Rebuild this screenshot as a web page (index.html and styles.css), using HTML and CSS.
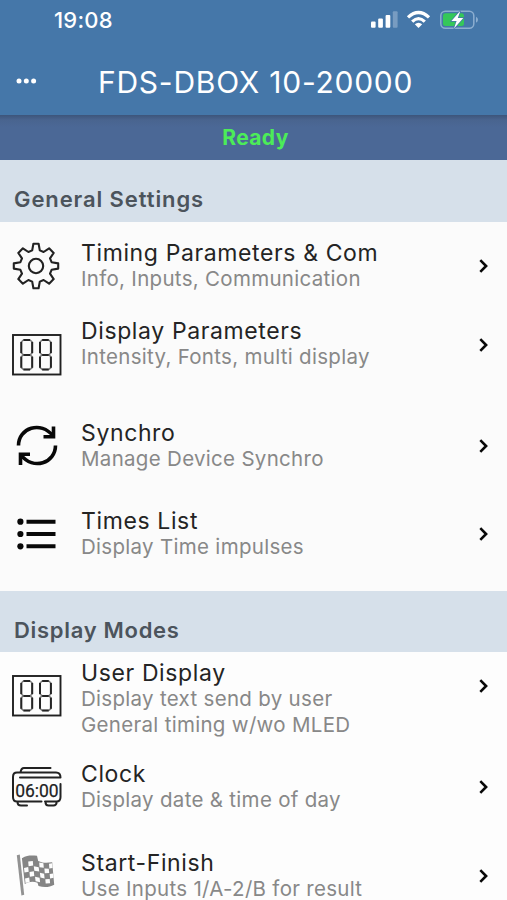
FILE: index.html
```html
<!DOCTYPE html>
<html lang="en">
<head>
<meta charset="utf-8">
<meta name="viewport" content="width=device-width, initial-scale=1">
<title>FDS-DBOX 10-20000</title>
<link rel="stylesheet" href="styles.css">
</head>
<body>
<svg class="defs" width="0" height="0" aria-hidden="true">
  <symbol id="chevron" viewBox="0 0 12 16"><path d="M2.3 2.2 8.1 8l-5.8 5.8" fill="none" stroke="#080808" stroke-width="2.6"/></symbol>
  <symbol id="digits" viewBox="0 0 50 42">
    <rect x="1" y="1" width="47.5" height="39.5" fill="none" stroke="#202020" stroke-width="1.9"/>
    <g fill="none" stroke="#777" stroke-width="1.5">
      <path id="halo" d="m9.3 8 2.2-2h6.5l2.2 2v11l-2.2 1.9h-6.5L9.3 19ZM9.3 22.7l2.2-1.8h6.5l2.2 1.8v11L18 35.4h-6.5l-2.2-1.7Z"/>
      <use href="#halo" x="18.7"/>
    </g>
    <g fill="none" stroke="#242424" stroke-width="2">
      <path id="seg" d="M11.5 6h6.5M11.5 21h6.5M11.5 35.4h6.5M9.3 8v11M20.2 8v11M9.3 22.7v11M20.2 22.7v11"/>
      <use href="#seg" x="18.7"/>
    </g>
  </symbol>
</svg>
<header class="appbar">
  <div class="status">
    <span class="time">19:08</span>
    <svg class="indicators" viewBox="0 0 110 24">
      <g fill="#fff"><rect x="1" y="13.5" width="4.6" height="6.3" rx="1"/><rect x="8.2" y="10.5" width="4.7" height="9.3" rx="1"/><rect x="15.6" y="7" width="4.7" height="12.8" rx="1"/><rect x="22.8" y="3.2" width="4.8" height="16.6" rx="1" opacity=".28"/></g>
      <g fill="none" stroke="#fff" stroke-width="3.2"><path d="M38 9.4Q48.5-.5 59 9.4"/><path d="M42.2 13.6Q48.5 7.6 54.8 13.6"/></g>
      <path d="m44.8 16.2 3.7 3.8 3.7-3.8q-3.7-3-7.4 0Z" fill="#fff"/>
      <rect x="70.8" y="3.2" width="33" height="17" rx="4.5" fill="none" stroke="#8caed0" stroke-width="1.5"/>
      <path d="M106 8.7v6q2-.8 2-3t-2-3Z" fill="#8caed0"/>
      <rect x="73" y="5.3" width="21" height="12.8" rx="2.5" fill="#35c759"/>
      <path d="m90.4 2.8-9 10.2h5.2l-2.6 7.6L93.3 10h-5.5Z" fill="#fff" stroke="#4577a9" stroke-width="1.4" paint-order="stroke"/>
    </svg>
  </div>
  <div class="titlebar">
    <svg class="more" viewBox="0 0 22 8" fill="#fff"><circle cx="3" cy="4" r="2.5"/><circle cx="10.3" cy="4" r="2.5"/><circle cx="17.6" cy="4" r="2.5"/></svg>
    <h1>FDS-DBOX 10-20000</h1>
  </div>
</header>
<div class="ready"><span>Ready</span></div>
<main>
  <h2><span>General Settings</span></h2>
  <section class="list first">
    <div class="row r1">
      <svg class="icon gear" viewBox="0 0 48 48" fill="none" stroke="#222" stroke-width="2.1" stroke-linejoin="round"><path d="M21.4 1.8h5.2l1.2 6.6 3.8 1.6 5.5-3.7 4.6 4.6-3.7 5.5 1.6 3.8 6.6 1.2v5.2l-6.6 1.2-1.6 3.8 3.7 5.5-4.6 4.6-5.5-3.7-3.8 1.6-1.2 6.6h-5.2l-1.2-6.6-3.8-1.6-5.5 3.7-4.6-4.6 3.7-5.5-1.6-3.8-6.6-1.2v-5.2l6.6-1.2 1.6-3.8-3.7-5.5 4.6-4.6 5.5 3.7 3.8-1.6Z"/><circle cx="24" cy="24" r="7.2"/></svg>
      <div class="copy"><h3><span>Timing Parameters &amp; Com</span></h3><p><span>Info, Inputs, Communication</span></p></div>
      <svg class="chevron"><use href="#chevron"/></svg>
    </div>
    <div class="row r2">
      <svg class="icon display"><use href="#digits"/></svg>
      <div class="copy"><h3><span>Display Parameters</span></h3><p><span>Intensity, Fonts, multi display</span></p></div>
      <svg class="chevron"><use href="#chevron"/></svg>
    </div>
    <div class="row r3">
      <svg class="icon sync" viewBox="0 0 42 42" fill="none" stroke="#080808" stroke-width="3.6"><path d="M2.5 20.5C2.5 3 25-4.8 37 11"/><path d="M39.5 20.5C39.5 38 17 45.8 5 30"/><path d="M37.5 1.5V11.8H27.5M4.5 40V29.2H14"/></svg>
      <div class="copy"><h3><span>Synchro</span></h3><p><span>Manage Device Synchro</span></p></div>
      <svg class="chevron"><use href="#chevron"/></svg>
    </div>
    <div class="row r4">
      <svg class="icon lines" viewBox="0 0 40 32" fill="#080808"><circle cx="3.4" cy="3.7" r="3.1"/><circle cx="3.4" cy="16" r="3.1"/><circle cx="3.4" cy="28.3" r="3.1"/><path d="M9.5 1.7h29v4h-29zM9.5 14h29v4h-29zM9.5 26.3h29v4h-29z"/></svg>
      <div class="copy"><h3><span>Times List</span></h3><p><span>Display Time impulses</span></p></div>
      <svg class="chevron"><use href="#chevron"/></svg>
    </div>
  </section>
  <h2 class="modes"><span>Display Modes</span></h2>
  <section class="list second">
    <div class="row r5">
      <svg class="icon user"><use href="#digits"/></svg>
      <div class="copy"><h3><span>User Display</span></h3><p><span>Display text send by user</span></p><p><span>General timing w/wo MLED</span></p></div>
      <svg class="chevron"><use href="#chevron"/></svg>
    </div>
    <div class="row r6">
      <svg class="icon clock" viewBox="0 0 50 42" fill="none" stroke="#222" stroke-width="2" stroke-linecap="round" stroke-linejoin="round"><path d="M8.5 6.5C9 3 10 2 12 2h26.5M8 6.6h36c3 0 4.5 1.5 4.5 5H8M8 6.6H5Q1 6.6 1 11v20q0 4.5 4 4.5h24.5M48.5 18v13q0 4.5-4 4.5H33M5.5 36q0 3.5 3.5 3.5h6M33.5 36q0 3.5 3 3.5h5q3 0 3.2-3.5"/><text x="3.2" y="30.6" textLength="43.5" lengthAdjust="spacingAndGlyphs">06:00</text></svg>
      <div class="copy"><h3><span>Clock</span></h3><p><span>Display date &amp; time of day</span></p></div>
      <svg class="chevron"><use href="#chevron"/></svg>
    </div>
    <div class="row r7">
      <svg class="icon flag" viewBox="0 0 40 44"><path d="M.8 2.2 3.8 1.4 8.2 41.8l-2.8.8Z" fill="#929292"/><path d="M5.9 5.2C12 1.7 16 2.5 21 2.8l1.2 5.1c5 2.4 9 1.9 14 1.3l2 22.6c-5 2.6-10 3-15.7 1.2l-1-3.3c-4.7-1.5-8.7-1-12.7 1.3Z" fill="#858585"/><path d="m12.2 8.5 4.6-.6.4 4.5-4.6.8ZM23.2 9.5l4.2.7.4 4.6-4.3-.6ZM33 10.8l3.2-.5.4 4.6-3.3.6ZM8 14.9l4.2-.8.5 4.6-4.2.9ZM17.8 13.2l4.9 1 .5 4.4-4.9-.8ZM28.4 15.6l4.4.1.4 4.4-4.4.1ZM13.5 19.1l4.3-.8.5 4.6-4.4.8ZM23.9 19.8l4.2.9.5 4.7-4.2-1ZM33.7 21l3.5-.6.4 4.3-3.5.7ZM9 25.4l4.2-.9.5 4.6-4.2.9ZM19 23.7l4.6 1 .5 4.5-4.5-1ZM29.3 26.2l4.4-.3.4 4.3-4.4.3Z" fill="#fdfdfd"/></svg>
      <div class="copy"><h3><span>Start-Finish</span></h3><p><span>Use Inputs 1/A-2/B for result</span></p></div>
      <svg class="chevron"><use href="#chevron"/></svg>
    </div>
  </section>
</main>
</body>
</html>
```
FILE: styles.css
```css
* { box-sizing: border-box; }
html, body { height: 900px; overflow: hidden; }
body, h1, h2, h3, p { margin: 0; }
body { background: #fbfbfb; font-family: Inter, "Liberation Sans", sans-serif; }
svg { display: block; flex: none; }
.defs { position: absolute; }
.appbar { height: 115px; background: #4577a9; color: #fff; }
.status { height: 40px; display: flex; justify-content: space-between; padding: 0 27px 0 54px; }
.time { line-height: 40px; font-size: 22px; font-weight: 500; letter-spacing: .2px; }
.indicators { width: 110px; height: 24px; margin-top: 8px; }
.titlebar { height: 75px; display: flex; align-items: flex-start; padding-left: 16px; }
.more { width: 22px; height: 8px; margin-top: 37px; }
h1 { margin-left: 60px; margin-top: 22px; line-height: 40px; font-size: 30px; font-weight: 400; letter-spacing: .75px; white-space: nowrap; }
.ready { height: 45px; background: linear-gradient(#3d557b 0, #49648f 5px, #4b6896 12px); color: #4cec58; display: flex; justify-content: center; padding-left: 4px; line-height: 45px; font-size: 21px; font-weight: 700; letter-spacing: .4px; }
h2 { height: 62px; background: #d6e0ea; padding: 17px 14px 0; color: #4c545c; line-height: 44px; font-size: 22px; font-weight: 600; letter-spacing: .9px; }
.modes { height: 61px; letter-spacing: .7px; }
.list { padding-top: 17px; }
.first { height: 369px; }
.second { padding-top: 7px; background: #fdfdfd; height: 260px; overflow: hidden; }
.row { display: grid; grid-template-columns: 81px 1fr 29px; align-items: start; }
.r1 { height: 78px; }
.r2 { height: 102px; }
.r3 { height: 88px; }
.r5 { height: 101px; }
.r6 { height: 89px; }
h3 { line-height: 28px; height: 27px; font-size: 23px; font-weight: 400; color: #242424; letter-spacing: .62px; white-space: nowrap; }
p { line-height: 26px; font-size: 20.5px; color: #888; letter-spacing: .3px; white-space: nowrap; }
.chevron { width: 12px; height: 16px; margin-top: 19px; }
.r2 .chevron { margin-top: 20px; }
.gear { width: 48px; height: 48px; margin: 3px 0 0 12px; }
.display, .user { width: 50px; height: 42px; margin: 17px 0 0 12px; }
.user { margin-top: 16px; }
.sync { width: 42px; height: 42px; margin: 6px 0 0 15.5px; }
.lines { width: 40px; height: 32px; margin: 11px 0 0 17px; }
.clock { width: 50px; height: 42px; margin: 6px 0 0 12px; }
.clock text { font: 400 19px Roboto, sans-serif; fill: #222; stroke: #222; stroke-width: .25; }
.flag { width: 40px; height: 44px; margin: 4px 0 0 16px; }
```
